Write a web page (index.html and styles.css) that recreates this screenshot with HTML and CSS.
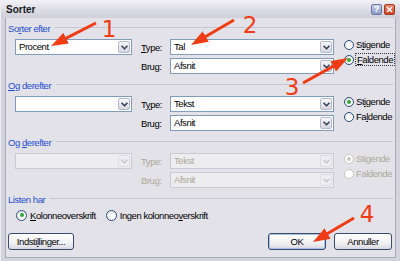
FILE: index.html
```html
<!DOCTYPE html>
<html>
<head>
  <title>Sorter</title>
  <link rel="stylesheet" href="styles.css">
</head>
<body>
  <div class="window">
    <div class="titlebar">
      <span class="title">Sorter</span>
      <div class="caption-buttons">
        <span class="cap-btn help">?</span>
        <span class="cap-btn close">
          <svg width="7" height="7" viewBox="0 0 7 7"><path d="M1 1 L6 6 M6 1 L1 6" stroke="#fff" stroke-width="1.6"/></svg>
        </span>
      </div>
    </div>

    <div class="client">
      <div class="group">
        <div class="group-title"><span>So<u>r</u>ter efter</span><span class="rule"></span></div>
        <div class="group-body">
          <div class="combo"><span class="value">Procent</span><span class="drop"><svg width="7" height="5" viewBox="0 0 7 5"><path d="M0.5 0.8 L3.5 3.8 L6.5 0.8" fill="none" stroke="#333c52" stroke-width="1.5"/></svg></span></div>
          <label class="field-label"><u>T</u>ype:</label>
          <div class="combo"><span class="value">Tal</span><span class="drop"><svg width="7" height="5" viewBox="0 0 7 5"><path d="M0.5 0.8 L3.5 3.8 L6.5 0.8" fill="none" stroke="#333c52" stroke-width="1.5"/></svg></span></div>
          <div class="radios">
            <div class="radio"><span class="dot"></span><span class="text">S<u>t</u>igende</span></div>
            <div class="radio checked"><span class="dot"></span><span class="text focus"><u>F</u>aldende</span></div>
          </div>
          <label class="field-label row2">Brug:</label>
          <div class="combo"><span class="value">Afsnit</span><span class="drop"><svg width="7" height="5" viewBox="0 0 7 5"><path d="M0.5 0.8 L3.5 3.8 L6.5 0.8" fill="none" stroke="#333c52" stroke-width="1.5"/></svg></span></div>
        </div>
      </div>

      <div class="group">
        <div class="group-title"><span><u>O</u>g derefter</span><span class="rule"></span></div>
        <div class="group-body">
          <div class="combo"><span class="value"></span><span class="drop"><svg width="7" height="5" viewBox="0 0 7 5"><path d="M0.5 0.8 L3.5 3.8 L6.5 0.8" fill="none" stroke="#333c52" stroke-width="1.5"/></svg></span></div>
          <label class="field-label">T<u>y</u>pe:</label>
          <div class="combo"><span class="value">Tekst</span><span class="drop"><svg width="7" height="5" viewBox="0 0 7 5"><path d="M0.5 0.8 L3.5 3.8 L6.5 0.8" fill="none" stroke="#333c52" stroke-width="1.5"/></svg></span></div>
          <div class="radios">
            <div class="radio checked"><span class="dot"></span><span class="text">St<u>i</u>gende</span></div>
            <div class="radio"><span class="dot"></span><span class="text">Fa<u>l</u>dende</span></div>
          </div>
          <label class="field-label row2">Brug:</label>
          <div class="combo"><span class="value">Afsnit</span><span class="drop"><svg width="7" height="5" viewBox="0 0 7 5"><path d="M0.5 0.8 L3.5 3.8 L6.5 0.8" fill="none" stroke="#333c52" stroke-width="1.5"/></svg></span></div>
        </div>
      </div>

      <div class="group disabled">
        <div class="group-title"><span>Og <u>d</u>erefter</span><span class="rule"></span></div>
        <div class="group-body">
          <div class="combo"><span class="value"></span><span class="drop"><svg width="7" height="5" viewBox="0 0 7 5"><path d="M0.5 0.8 L3.5 3.8 L6.5 0.8" fill="none" stroke="#c4c4cc" stroke-width="1.5"/></svg></span></div>
          <label class="field-label">Type:</label>
          <div class="combo"><span class="value">Tekst</span><span class="drop"><svg width="7" height="5" viewBox="0 0 7 5"><path d="M0.5 0.8 L3.5 3.8 L6.5 0.8" fill="none" stroke="#c4c4cc" stroke-width="1.5"/></svg></span></div>
          <div class="radios">
            <div class="radio checked"><span class="dot"></span><span class="text">Stigende</span></div>
            <div class="radio"><span class="dot"></span><span class="text">Faldende</span></div>
          </div>
          <label class="field-label row2">Brug:</label>
          <div class="combo"><span class="value">Afsnit</span><span class="drop"><svg width="7" height="5" viewBox="0 0 7 5"><path d="M0.5 0.8 L3.5 3.8 L6.5 0.8" fill="none" stroke="#c4c4cc" stroke-width="1.5"/></svg></span></div>
        </div>
      </div>

      <div class="group last">
        <div class="group-title"><span>Listen har</span><span class="rule"></span></div>
        <div class="options">
          <div class="radio checked"><span class="dot"></span><span class="text"><u>K</u>olonneoverskrift</span></div>
          <div class="radio"><span class="dot"></span><span class="text">Ingen kolonneo<u>v</u>erskrift</span></div>
        </div>
      </div>

      <div class="button-row">
        <button class="btn settings">Indsti<u>l</u>linger...</button>
        <span class="spacer"></span>
        <button class="btn default">OK</button>
        <button class="btn">Annuller</button>
      </div>
    </div>

    <svg class="annotations" width="400" height="261" viewBox="0 0 400 261">
      <defs>
        <marker id="head" markerUnits="userSpaceOnUse" markerWidth="18" markerHeight="12" refX="7" refY="6" orient="auto">
          <path d="M0 0 L17 6 L0 12 Z" fill="#f03c14"/>
        </marker>
      </defs>
      <line x1="95" y1="23" x2="58.9" y2="41.4" marker-end="url(#head)"/>
      <line x1="233" y1="20" x2="198.7" y2="40" marker-end="url(#head)"/>
      <line x1="302" y1="83" x2="338.3" y2="62.9" marker-end="url(#head)"/>
      <line x1="353" y1="218" x2="320.6" y2="237" marker-end="url(#head)"/>
      <text x="108" y="37">1</text>
      <text x="249" y="33">2</text>
      <text x="291" y="95">3</text>
      <text x="366" y="222">4</text>
    </svg>
  </div>
</body>
</html>
```

FILE: styles.css
```css
body {
  margin: 0;
  background: #d6d6e0;
  font-family: "Liberation Sans", Arial, sans-serif;
  font-size: 9.5px;
  letter-spacing: -0.45px;
  color: #000;
}
.window {
  position: relative;
  width: 400px;
  height: 261px;
  box-sizing: border-box;
  display: flex;
  flex-direction: column;
  background: #d3d3de;
  border-left: 1px solid #eeeef3;
  overflow: hidden;
}
.titlebar {
  height: 18px;
  flex-shrink: 0;
  display: flex;
  align-items: center;
  justify-content: space-between;
  padding: 0 5px 0 5px;
  background: linear-gradient(#f2f2f6, #dadae3 60%, #cfcfda);
}
.title {
  font-weight: bold;
  font-size: 10px;
  letter-spacing: 0;
  color: #1a1a22;
}
.caption-buttons {
  display: flex;
  gap: 2px;
}
.cap-btn {
  width: 11px;
  height: 11px;
  box-sizing: border-box;
  border-radius: 2px;
  display: flex;
  align-items: center;
  justify-content: center;
  font-weight: bold;
  font-size: 9px;
  letter-spacing: 0;
  line-height: 1;
  color: #fff;
}
.help {
  background: linear-gradient(#c7cfe6, #8c9cc8);
  border: 1px solid #6a78a2;
}
.close {
  background: linear-gradient(#f08a70, #d2401e);
  border: 1px solid #9b3a22;
}
.client {
  flex: 1;
  margin: 0 4px 3px 4px;
  padding: 4px 2px 0 2px;
  background: #e3e2e8;
  border-left: 1px solid #a9a9b8;
  border-right: 1px solid #a9a9b8;
  border-bottom: 1px solid #a9a9b8;
}
.group {
  margin-bottom: 5px;
}
.group-title {
  display: flex;
  align-items: center;
  height: 12px;
  color: #1d4fcf;
}
.group-title .rule {
  flex: 1;
  margin-left: 5px;
  margin-top: -2px;
  border-top: 1px solid #c5c5cf;
}
.group-body {
  display: grid;
  grid-template-columns: 117px 38px 164px 1fr;
  grid-template-rows: 16px 16px;
  row-gap: 3px;
  margin-top: 5px;
  padding-left: 7px;
}
.field-label {
  align-self: center;
  padding-left: 9px;
}
.field-label.row2 {
  grid-column: 2;
}
.combo {
  display: flex;
  box-sizing: border-box;
  height: 16px;
  background: #fff;
  border: 1px solid #7f9db9;
}
.combo .value {
  flex: 1;
  padding-left: 3px;
  line-height: 14px;
}
.combo .drop {
  width: 12px;
  margin: 1px;
  box-sizing: border-box;
  display: flex;
  align-items: center;
  justify-content: center;
  border: 1px solid #b6b8c8;
  border-radius: 2px;
  background: linear-gradient(#f7f7fa, #d6d7e2);
}
.radios {
  grid-column: 4;
  grid-row: 1 / span 2;
  display: flex;
  flex-direction: column;
  padding-left: 10px;
  margin-top: -2px;
}
.radio {
  display: flex;
  align-items: center;
  height: 15px;
}
.radio .dot {
  width: 10px;
  height: 10px;
  box-sizing: border-box;
  border-radius: 50%;
  border: 1px solid #2b4f7e;
  background: radial-gradient(circle at 65% 65%, #fff 30%, #dcdcd8);
  margin-right: 2px;
  display: flex;
  align-items: center;
  justify-content: center;
}
.radio.checked .dot::after {
  content: "";
  width: 4px;
  height: 4px;
  border-radius: 50%;
  background: #2fa72f;
}
.radio .text.focus {
  outline: 1px dotted #333;
  padding: 0 1px;
}
.disabled .combo {
  background: #ededf0;
  border-color: #cacad2;
  color: #aca899;
}
.disabled .combo .drop {
  border-color: #dcdce2;
  background: #eeeef2;
}
.disabled .field-label,
.disabled .radio {
  color: #aca899;
}
.disabled .radio .dot {
  border-color: #cac8bb;
  background: #fff;
}
.disabled .radio.checked .dot::after {
  background: #cac8bb;
}
.group.last {
  margin-top: 2px;
}
.options {
  display: flex;
  gap: 10px;
  margin-top: 3px;
  padding-left: 8px;
}
.options .radio {
  height: 14px;
}
.options .radio .dot {
  width: 11px;
  height: 11px;
  margin-right: 3px;
}
.button-row {
  display: flex;
  gap: 8px;
  margin-top: 11px;
  margin-right: 1px;
}
.spacer {
  flex: 1;
}
.btn {
  height: 17px;
  width: 58px;
  padding: 0;
  box-sizing: border-box;
  font-family: inherit;
  font-size: inherit;
  letter-spacing: inherit;
  color: #000;
  border: 1px solid #3a4a6c;
  border-radius: 3px;
  background: linear-gradient(#ffffff, #f1f1f4 60%, #d8d8e2);
}
.btn.settings {
  width: 66px;
}
.btn.default {
  box-shadow: inset 0 0 0 1px #a9c0ea;
}
.annotations {
  position: absolute;
  top: 0;
  left: 0;
  pointer-events: none;
}
.annotations line {
  stroke: #f03c14;
  stroke-width: 3;
}
.annotations text {
  fill: #f03c14;
  font-family: "DejaVu Sans", sans-serif;
  font-size: 23px;
  text-anchor: middle;
  letter-spacing: 0;
}
```
